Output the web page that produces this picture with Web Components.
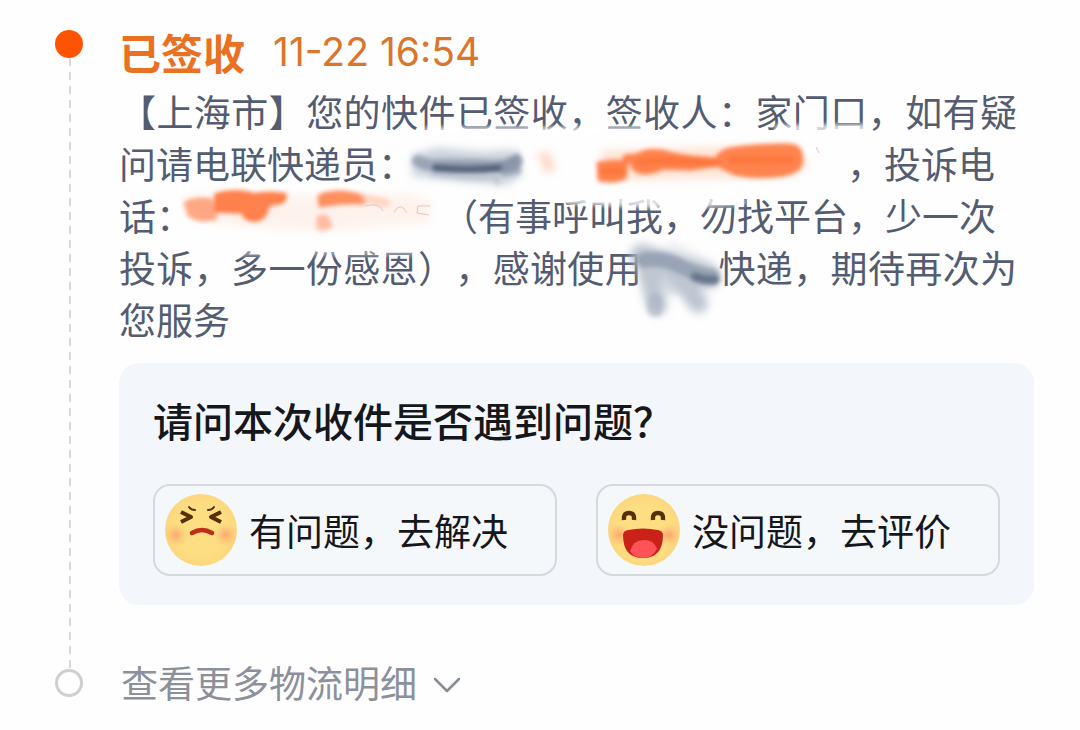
<!DOCTYPE html>
<html lang="zh-CN">
<head>
<meta charset="utf-8">
<meta name="viewport" content="width=device-width, initial-scale=1">
<title>物流详情</title>
<style>
body{margin:0;background:#fefefe;font-family:Inter,"Noto Sans CJK SC",sans-serif;color:#535c70}
</style>
</head>
<body>
<logistics-timeline>
  <timeline-step state="active">
    <status-heading time="11-22 16:54">已签收</status-heading>
    <delivery-message></delivery-message>
    <feedback-card question="请问本次收件是否遇到问题？">
      <feedback-option mood="sad">有问题，去解决</feedback-option>
      <feedback-option mood="happy">没问题，去评价</feedback-option>
    </feedback-card>
  </timeline-step>
  <timeline-step state="pending">
    <more-link>查看更多物流明细</more-link>
  </timeline-step>
</logistics-timeline>
<script>
const define = (name, render) => customElements.define(name, class extends HTMLElement {
  connectedCallback() {
    if (!this.shadowRoot) this.attachShadow({mode: "open"}).innerHTML = render(this);
  }
});

define("logistics-timeline", () => `
<style>:host{display:block;padding:24px 46px 20px 55px}</style><slot></slot>`);

define("timeline-step", () => `
<style>
:host{display:grid;grid-template-columns:28px minmax(0,1fr);column-gap:36px}
.rail{display:flex;flex-direction:column;align-items:center;padding-top:6px}
.dot{box-sizing:border-box;width:28px;height:28px;border-radius:50%;background:#fd5303;flex:none}
:host([state=pending]) .dot{background:none;border:3px solid #cfcfcf}
.line{width:2px;flex:1;margin:0 0 -12px 1px;background:repeating-linear-gradient(#d9d9d9 0 8px,transparent 8px 14px)}
:host([state=pending]) .line{display:none}
:host([state=pending]) .rail{padding-top:13px}
.body{min-width:0}
:host([state=active]) .body{padding-bottom:51px}
</style>
<div class="rail"><span class="dot"></span><span class="line"></span></div>
<div class="body"><slot></slot></div>`);

define("status-heading", el => `
<style>
:host{display:flex;align-items:center;gap:28px;height:56px}
h1{margin:0;font:bold 42px/52px "Noto Sans CJK SC",sans-serif;color:#ea7022}
time{font-size:39px;line-height:56px;color:#da762c}
</style>
<h1><slot></slot></h1><time>${el.getAttribute("time")}</time>`);

define("delivery-message", () => `
<style>
:host{display:block;position:relative;padding:5px 17px 0 0}
p{margin:0;font:37px/52px "Noto Sans CJK SC",sans-serif;text-align:justify;text-spacing-trim:space-all}
.gap{display:inline-block;height:20px}
.name{width:432px}.phone{width:248px}.brand{width:76px}
svg{position:absolute;left:0;top:0;overflow:visible;pointer-events:none}
</style>
<p>【上海市】您的快件已签收，签收人：家门口，如有疑问请电联快递员：<span class="gap name"></span>，投诉电<br>话：<span class="gap phone"></span>（有事呼叫我，勿找平台，少一次<br>投诉，多一份感恩），感谢使用<span class="gap brand"></span>快递，期待再次为您服务</p>
<svg width="898" height="266" viewBox="119 80 898 266" aria-hidden="true">
<defs>
<filter id="b1" x="-20%" y="-40%" width="140%" height="180%"><feGaussianBlur stdDeviation="2"/></filter>
<filter id="b3" x="-20%" y="-60%" width="140%" height="220%"><feGaussianBlur stdDeviation="4"/></filter>
</defs>
<g filter="url(#b1)" fill="#fefefe">
<path d="M425 127h220v6H425zM775 125l90-1v8h-90z" opacity=".8"/>
<path d="M565 197l110-2 70 3v7l-70 4-110-5z" opacity=".8"/>
<path d="M230 249h185v7H230z" opacity=".4"/>
</g>
<g filter="url(#b3)">
<path d="M412 155l25-7 45 4 35-2 4 26-16 9-92-9z" fill="#b9c1ce" opacity=".75"/>
<path d="M538 153l11-1 6 18-10 2z" fill="#ffc3a6" opacity=".7"/>
<path d="M600 151l195-6 14 20-20 12-180 3z" fill="#ffd0b8" opacity=".6"/>
<path d="M185 195l110 1 110-2 28 7-5 22-105 8-90-5-45-8z" fill="#ffe5d9" opacity=".45"/>
<g fill="none" stroke="#b3bccb" stroke-linecap="round" opacity=".85">
<path d="M642 256L708 277" stroke-width="24"/>
<path d="M647 268L657 305" stroke-width="20"/>
<path d="M678 275L698 303" stroke-width="20"/>
<path d="M664 272L672 288" stroke-width="14" opacity=".7"/>
<path d="M670 245L712 265" stroke-width="6" opacity=".4"/>
</g>
</g>
<g filter="url(#b1)" stroke-linecap="round" stroke-linejoin="round">
<path d="M418 161q9 5 20 4t66 1q8-1 13-5" fill="none" stroke="#8b96aa" stroke-width="12" opacity=".75"/>
<path d="M500 164l18-9 1 17-16 2z" fill="#7f8ba1" stroke="#7f8ba1" stroke-width="4" opacity=".6"/>
<path d="M436 168q32 3 62 0" fill="none" stroke="#4c5974" stroke-width="8" opacity=".85"/>
<path d="M432 174q38 6 65 3v6" stroke="#b3bcca" stroke-width="4" fill="none" opacity=".7"/>
<g fill="#ff7840" stroke="#ff7840" stroke-width="3" opacity=".9">
<path d="M598 163q14-3 29-1l-2 16q-12 5-26 2z"/>
<path d="M637 155q8-6 25-4 12 4 30 6l24 2q5-10 20-11 22-3 50-3 14 0 15 9 3 14-8 18-25 8-58 2l-18-9-26 4-28-1q-13 7-24 4-8-3-6-9l-10-1 2-6z"/>
</g>
<path d="M640 162q35-3 75 1M732 160h58M602 171h20" fill="none" stroke="#fb682b" stroke-width="7" opacity=".5"/>
<path d="M185 203q12-6 26-3l5 18q-16 5-27-3z" fill="#ff9b70" stroke="#ff9b70" stroke-width="3" opacity=".85"/>
<path d="M216 195q20-6 38 0 17-3 31 0 1 9-17 9-2 15-13 16-10 0-12-8-14-1-27-1z" fill="#ff7b45" stroke="#ff7b45" stroke-width="4" opacity=".95"/>
<path d="M319 196q18-8 43 0l2 7q-20-1-44 3z" fill="#ff8450" stroke="#ff8450" stroke-width="3" opacity=".9"/>
<path d="M318 217q9-3 10 2l3 7q-8 5-13 2z" fill="#ffb090" stroke="#ffb090" stroke-width="3" opacity=".8"/>
<path d="M364 198l22 5" stroke="#ffb795" stroke-width="8" fill="none" opacity=".5"/>
<path d="M644 260q22-3 38 7 17 8 30 9" fill="none" stroke="#8490a5" stroke-width="15" opacity=".65"/>
<path d="M695 277q10 4 20 3" fill="none" stroke="#59677d" stroke-width="9" opacity=".75"/>
<path d="M655 301v8" fill="none" stroke="#a3adbe" stroke-width="15" opacity=".5"/>
</g>
<path d="M365 206q15-4 18 5M394 212q7-11 13 1M430 206h-12l-1 7 12 2M816 147l3 6" fill="none" stroke="#e4c6bd" stroke-width="1"/>
</svg>`);

define("feedback-card", el => `
<style>
:host{display:block;margin-top:18px;padding:27px 34px 29px;border-radius:20px;background:#f3f6fa}
h2{margin:0;font:500 40px/60px "Noto Sans CJK SC",sans-serif;color:#15171b}
.options{display:grid;grid-template-columns:1fr 1fr;gap:39px;margin-top:34px}
</style>
<h2>${el.getAttribute("question")}</h2>
<div class="options"><slot></slot></div>`);

const FACES = {
  sad: `<g fill="none" stroke="#55300a" stroke-linejoin="round">
<path d="M16 18l10 5-10 5M56 18l-10 5 10 5" stroke-width="4"/>
<path d="M24 13q2 3 6 3M49 13q-2 3-6 3" stroke-width="2" stroke-linecap="round"/></g>
<path d="M27 39q10-6 20 0" fill="none" stroke="#bd2e18" stroke-width="4.5" stroke-linecap="round"/>`,
  happy: `<g fill="none" stroke="#55300a" stroke-width="4.5">
<path d="M16 26q-1-7 5-7t5 7M45 26q-1-7 5-7t5 7"/></g>
<path d="M15 41q0-4 5-5 15-3 30 0 5 1 5 5 0 23-20 23T15 41z" fill="#ca2118"/>
<path d="M22 57q3-11 14-11 10 0 13 9-5 9-14 9t-13-7z" fill="#ff5357"/>`
};

define("feedback-option", el => `
<style>
:host{display:block;min-width:0}
button{box-sizing:border-box;width:100%;height:92px;display:flex;align-items:center;gap:12px;padding:0 10px;border:2px solid #d5d8dd;border-radius:17px;background:#f5f8fb;color:#15171b;font:37px/52px "Noto Sans CJK SC",sans-serif;white-space:nowrap;cursor:pointer}
svg{flex:none}
</style>
<button type="button"><svg width="72" height="72" viewBox="0 0 72 72" aria-hidden="true">
<defs><radialGradient id="c"><stop stop-color="#fb9867" stop-opacity=".8"/><stop offset="1" stop-color="#fdb673" stop-opacity="0"/></radialGradient>
<radialGradient id="f"><stop offset=".7" stop-color="#fede82"/><stop offset="1" stop-color="#fbd77d"/></radialGradient>
<clipPath id="k"><circle cx="36" cy="36" r="36"/></clipPath></defs>
<circle cx="36" cy="36" r="36" fill="url(#f)"/>
<g clip-path="url(#k)"><circle cx="11" cy="41" r="12" fill="url(#c)"/><circle cx="61" cy="41" r="12" fill="url(#c)"/></g>
${FACES[el.getAttribute("mood")]}</svg><span><slot></slot></span></button>`);

define("more-link", () => `
<style>
:host{display:block}
a{display:inline-flex;align-items:center;gap:16px;padding-left:2px;font:37px/52px "Noto Sans CJK SC",sans-serif;color:#8b909b;text-decoration:none}
</style>
<a href="#details"><span><slot></slot></span><svg width="28" height="24" viewBox="0 0 28 24" fill="none" stroke="#858b97" stroke-width="2.5" stroke-linecap="round" stroke-linejoin="round" aria-hidden="true"><path d="M2 9l12 12L26 9"/></svg></a>`);
</script>
</body>
</html>
